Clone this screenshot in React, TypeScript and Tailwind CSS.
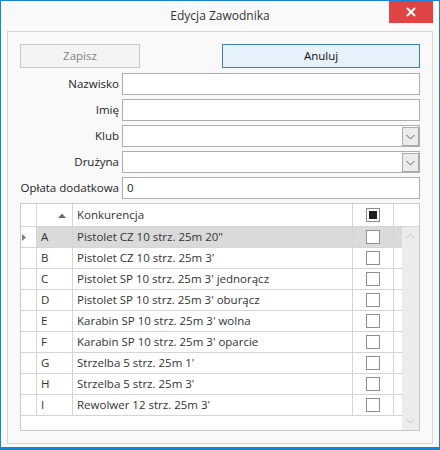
import React from "react";

const rows = [
  ["A", 'Pistolet CZ 10 strz. 25m 20"'],
  ["B", "Pistolet CZ 10 strz. 25m 3'"],
  ["C", "Pistolet SP 10 strz. 25m 3' jednorącz"],
  ["D", "Pistolet SP 10 strz. 25m 3' oburącz"],
  ["E", "Karabin SP 10 strz. 25m 3' wolna"],
  ["F", "Karabin SP 10 strz. 25m 3' oparcie"],
  ["G", "Strzelba 5 strz. 25m 1'"],
  ["H", "Strzelba 5 strz. 25m 3'"],
  ["I", "Rewolwer 12 strz. 25m 3'"],
];

function Chevron({ up, color }: { up?: boolean; color: string }) {
  return (
    <svg width="9" height="6" viewBox="0 0 9 6">
      <path
        d={up ? "M0.5 5 L4.5 1 L8.5 5" : "M0.5 1 L4.5 5 L8.5 1"}
        fill="none"
        stroke={color}
        strokeWidth="1"
      />
    </svg>
  );
}

function Field({ label, combo, value }: { label: string; combo?: boolean; value?: string }) {
  return (
    <div className="flex items-center h-[22px]">
      <div className="w-[102px] pr-[3px] text-right text-[#1e1e1e] whitespace-nowrap">{label}</div>
      <div className="flex-1 h-[22px] border border-[#abadb3] bg-white flex items-center pl-[4px] relative">
        <span className="text-[#1e1e1e]">{value}</span>
        {combo && (
          <div className="absolute right-0 top-[1px] w-[17px] h-[19px] border border-[#acacac] bg-[#ebebeb] flex items-center justify-center">
            <Chevron color="#606060" />
          </div>
        )}
      </div>
    </div>
  );
}

function Box({ checked }: { checked?: boolean }) {
  return (
    <div className="w-[14px] h-[14px] border border-[#8f8f8f] bg-white flex items-center justify-center">
      {checked && <div className="w-[8px] h-[8px] bg-[#1f1f1f]" />}
    </div>
  );
}

export default function App() {
  return (
    <div
      className="w-[440px] h-[450px] bg-[#f9f9f9] border border-[#1883d7] border-b-[3px] flex flex-col text-[11.5px]"
      style={{ fontFamily: '"Open Sans", "Noto Sans", sans-serif' }}
    >
      <div className="h-[30px] flex items-start relative">
        <div className="absolute inset-x-0 top-0 h-[30px] flex items-center justify-center text-[#333] text-[12px]">
          Edycja Zawodnika
        </div>
        <div className="ml-auto mr-[6px] w-[44px] h-[22px] bg-[#e04343] flex items-center justify-center relative">
          <svg width="10" height="10" viewBox="0 0 10 10">
            <path d="M1 1 L9 9 M9 1 L1 9" stroke="white" strokeWidth="2" />
          </svg>
        </div>
      </div>
      <div className="mx-[6px] mb-[3px] flex-1 border border-[#d5d5d5] bg-[#f9f9f9] pt-[12px] px-[12px] flex flex-col gap-[4px]">
        <div className="flex h-[24px] mb-[1px]">
          <div className="w-[120px] h-[24px] border border-[#c8c8c8] bg-[#f4f4f4] text-[#838383] flex items-center justify-center">
            Zapisz
          </div>
          <div className="ml-auto w-[198px] h-[24px] border border-[#3c7fb1] bg-[#e5f1fb] text-[#111] flex items-center justify-center">
            Anuluj
          </div>
        </div>
        <Field label="Nazwisko" />
        <Field label="Imię" />
        <Field label="Klub" combo />
        <Field label="Drużyna" combo />
        <Field label="Opłata dodatkowa" value="0" />
        <div className="h-[228px] border border-[#c9c9c9] bg-white flex flex-col text-[#333]">
          <div className="h-[23px] flex border-b border-[#d5d5d5]">
            <div className="w-[16px] border-r border-[#d5d5d5]" />
            <div className="w-[36px] border-r border-[#d5d5d5] flex items-center justify-end pr-[6px]">
              <svg width="8" height="5" viewBox="0 0 8 5">
                <path d="M0 5 L4 0.5 L8 5 Z" fill="#6d6d6d" />
              </svg>
            </div>
            <div className="w-[280px] border-r border-[#d5d5d5] flex items-center pl-[4px]">Konkurencja</div>
            <div className="w-[41px] border-r border-[#d5d5d5] flex items-center justify-center">
              <Box checked />
            </div>
            <div className="flex-1" />
          </div>
          <div className="flex flex-1">
            <div className="w-[381px] flex flex-col">
              {rows.map(([l, n], i) => (
                <div key={l} className="h-[21px] flex border-b border-[#d5d5d5]">
                  <div className="w-[16px] border-r border-[#d5d5d5] bg-white flex items-center pl-[1px]">
                    {i === 0 && (
                      <svg width="4" height="7" viewBox="0 0 4 7">
                        <path d="M0 0 L4 3.5 L0 7 Z" fill="#808080" />
                      </svg>
                    )}
                  </div>
                  <div className={`flex flex-1 ${i === 0 ? "bg-[#dadada]" : ""}`}>
                    <div className="w-[36px] border-r border-[#d5d5d5] flex items-center pl-[4px]">{l}</div>
                    <div className="w-[280px] border-r border-[#d5d5d5] flex items-center pl-[4px] whitespace-nowrap overflow-hidden">
                      {n}
                    </div>
                    <div className="w-[41px] border-r border-[#d5d5d5] flex items-center justify-center">
                      <Box />
                    </div>
                    <div className="flex-1" />
                  </div>
                </div>
              ))}
            </div>
            <div className="w-[17px] bg-[#ececec] flex flex-col items-center justify-between pt-[6px] pb-[6px]">
              <Chevron up color="#c2c2c2" />
              <Chevron color="#c2c2c2" />
            </div>
          </div>
        </div>
      </div>
    </div>
  );
}
